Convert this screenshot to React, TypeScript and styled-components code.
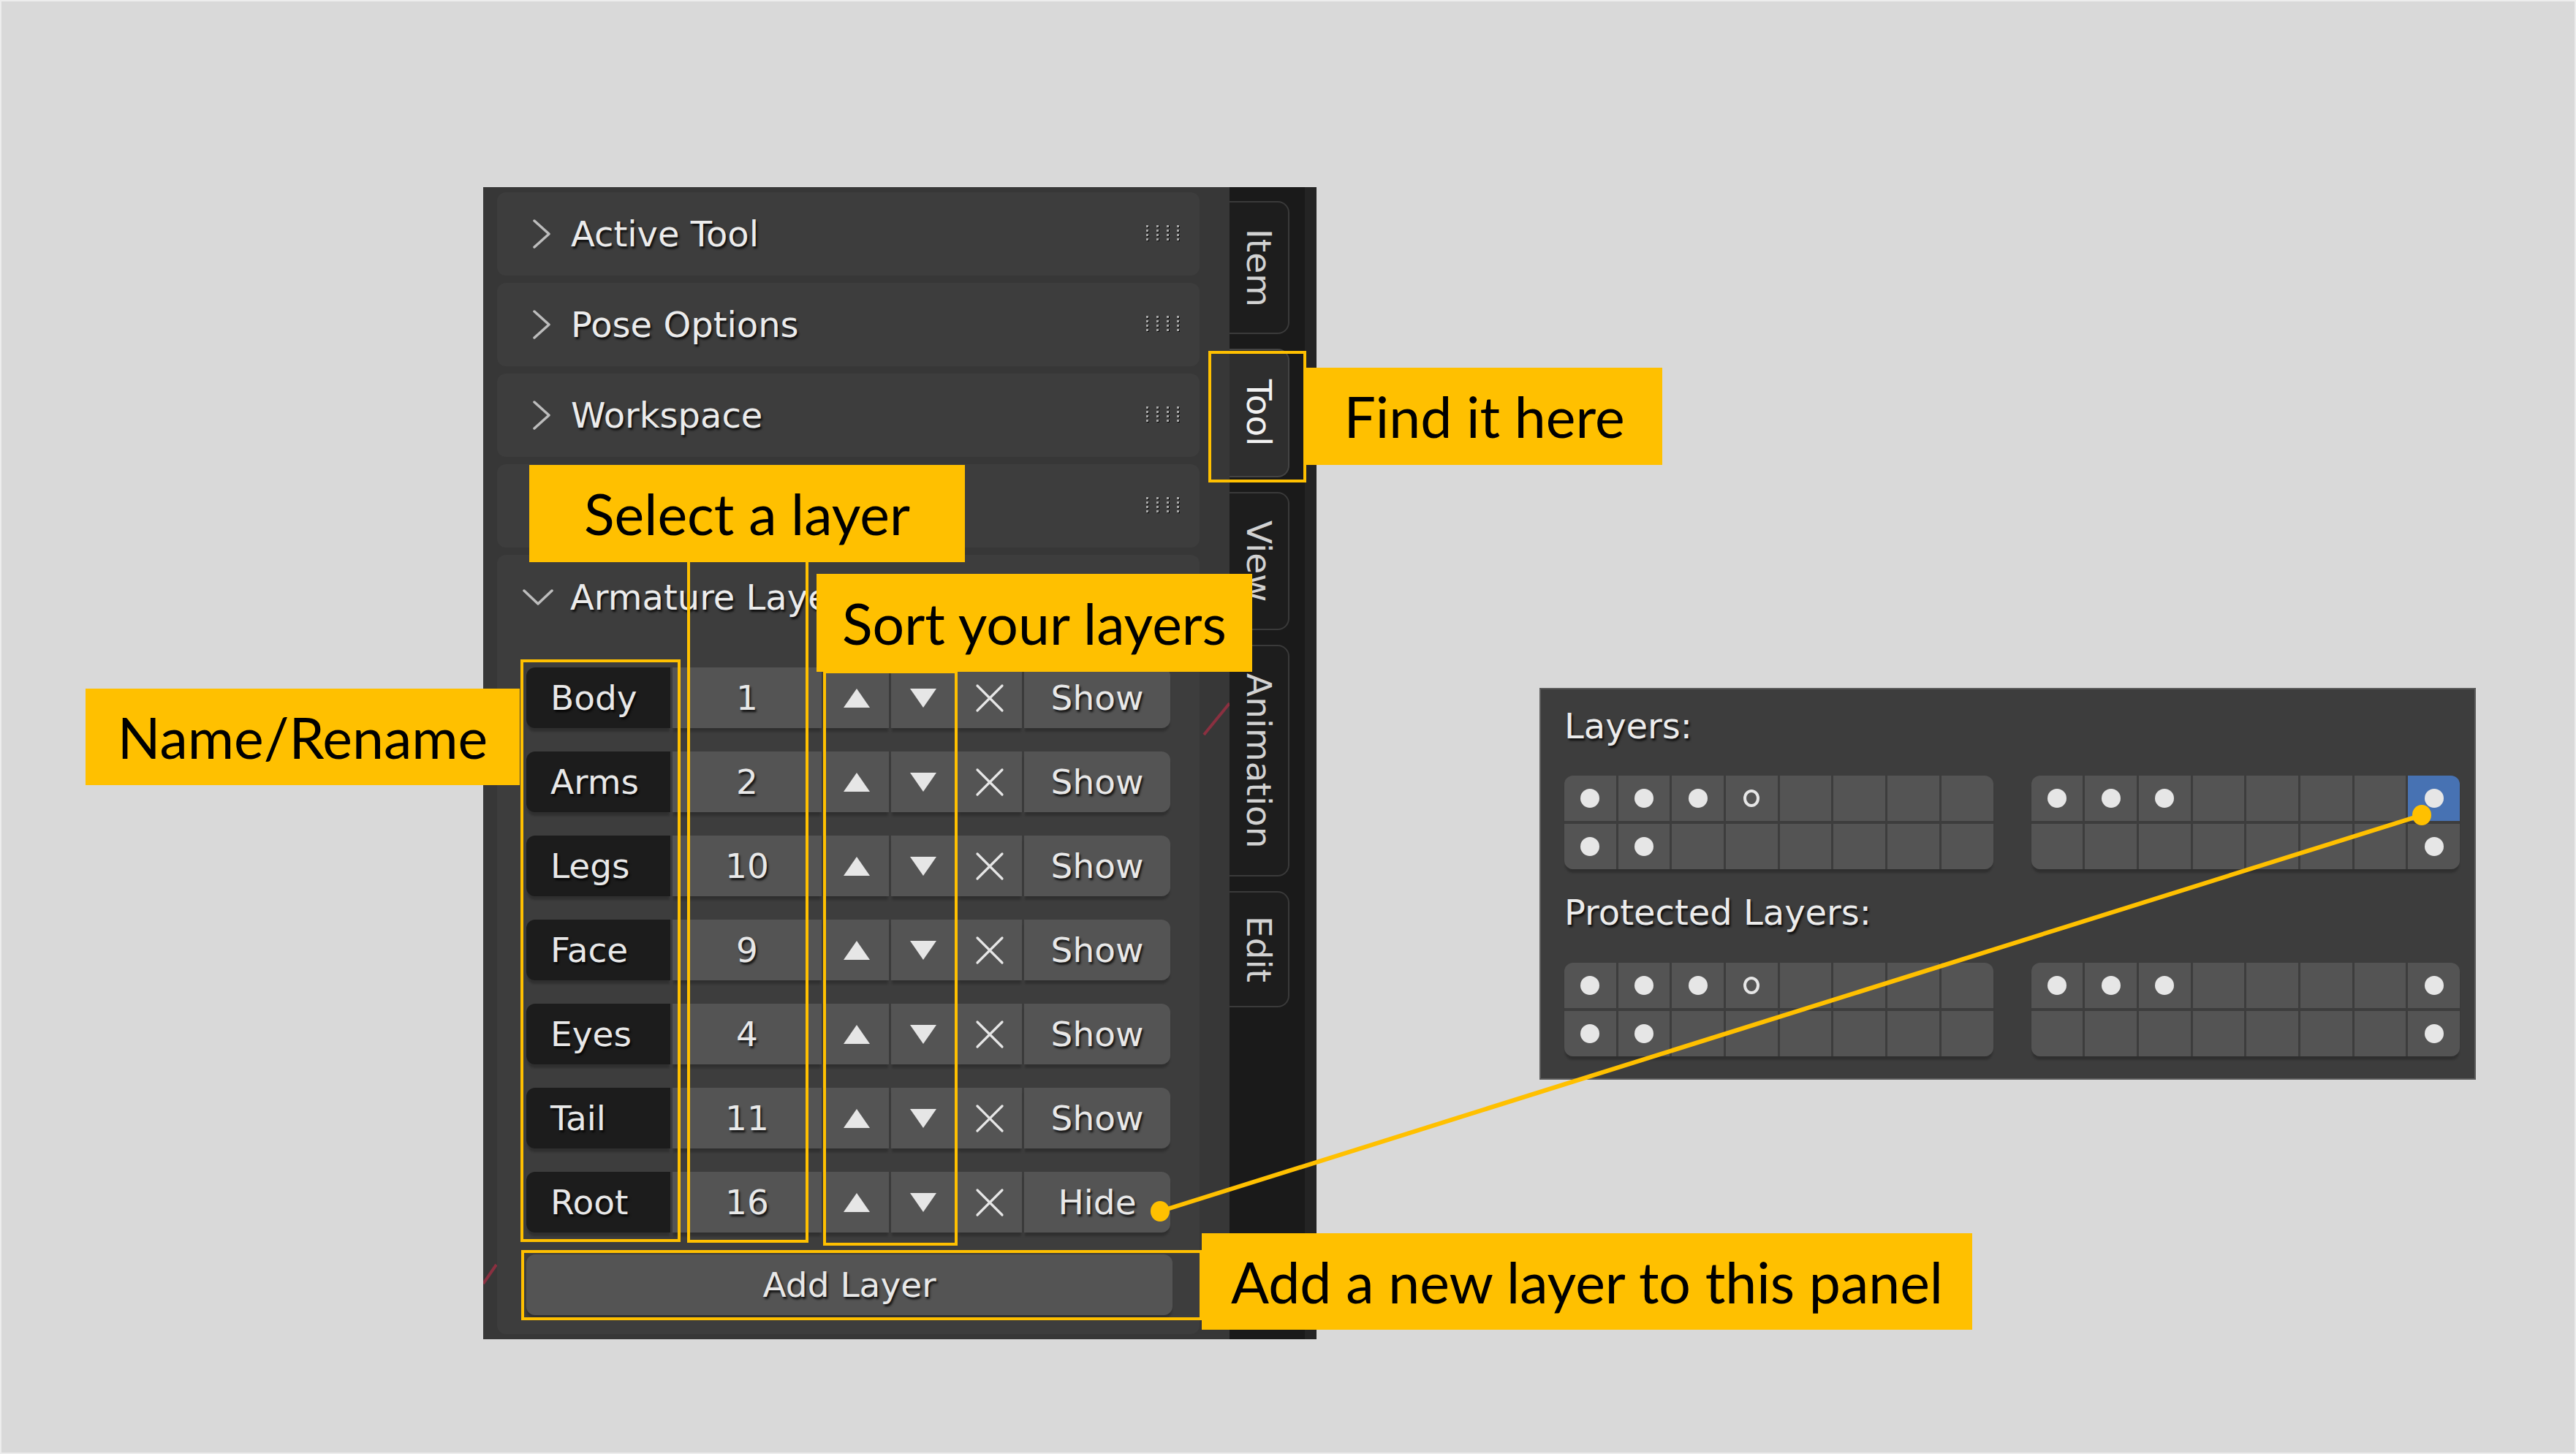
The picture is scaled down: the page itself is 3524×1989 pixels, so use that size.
import React from "react";
import styled, { createGlobalStyle } from "styled-components";

const GlobalStyle = createGlobalStyle`
  html, body { margin: 0; padding: 0; background: #d9d9d9; }
  body { width: 3524px; height: 1989px; overflow: hidden; }
  * { box-sizing: border-box; }
`;

const YELLOW = "#ffc000";

const Page = styled.div`
  position: relative;
  width: 3524px;
  height: 1989px;
  background: #d9d9d9;
  box-shadow: inset 0 0 0 2px #ededed;
  display: flex;
  align-items: flex-start;
  padding: 256px 0 0 661px;
  gap: 305px;
  font-family: "DejaVu Sans", sans-serif;
`;

/* ---------- Blender sidebar ---------- */
const Sidebar = styled.div`
  display: flex;
  flex-shrink: 0;
  width: 1140px;
  height: 1576px;
`;

const Region = styled.div`
  width: 1021px;
  height: 100%;
  background: #373737;
  padding: 7px 41px 7px 19px;
  display: flex;
  flex-direction: column;
  gap: 10px;
  position: relative;
  overflow: hidden;
`;

const ViewportBits = styled.svg`
  position: absolute;
  left: 0;
  top: 0;
  pointer-events: none;
`;

const BlText = styled.span`
  font-family: "DejaVu Sans", sans-serif;
  font-size: 48px;
  color: #ececec;
  text-shadow: 2px 3px 3px rgba(0, 0, 0, 0.8);
  white-space: nowrap;
  line-height: 1;
`;

const PanelHeader = styled.div`
  position: relative;
  height: 114px;
  flex-shrink: 0;
  background: #3d3d3d;
  border-radius: 12px;
  display: flex;
  align-items: center;
  padding: 0 27px 0 48px;
`;

const HeaderTitle = styled(BlText)`
  margin-left: 27px;
  flex: 1;
`;

const Panel = styled.div`
  position: relative;
  flex: 1;
  background: #3d3d3d;
  border-radius: 12px;
  display: flex;
  flex-direction: column;
`;

const SubHeader = styled.div`
  height: 116px;
  display: flex;
  align-items: center;
  padding-left: 35px;
`;

const SubTitle = styled(BlText)`
  margin-left: 23px;
`;

const PanelBody = styled.div`
  display: flex;
  flex-direction: column;
  gap: 32px;
  padding: 38px 39px 26px 40px;
`;

const LayerRow = styled.div`
  display: flex;
  gap: 3px;
  height: 83px;
`;

const Cell = styled.div<{ $w: number; $dark?: boolean; $first?: boolean; $last?: boolean; $left?: boolean }>`
  width: ${(p) => p.$w}px;
  height: 100%;
  background: ${(p) => (p.$dark ? "#1c1c1c" : "#545454")};
  border-radius: ${(p) => (p.$first ? "12px 0 0 12px" : p.$last ? "0 12px 12px 0" : "0")};
  box-shadow: 0 6px 3px -1px rgba(0, 0, 0, 0.22);
  display: flex;
  align-items: center;
  justify-content: ${(p) => (p.$left ? "flex-start" : "center")};
  padding-left: ${(p) => (p.$left ? "33px" : "0")};
`;

const CellText = styled(BlText)`
  font-size: 47px;
  color: #e8e8e8;
`;

const AddButton = styled.div`
  height: 83px;
  width: 884px;
  margin-top: -2px;
  background: #545454;
  border-radius: 12px;
  box-shadow: 0 6px 3px -1px rgba(0, 0, 0, 0.22);
  display: flex;
  align-items: center;
  justify-content: center;
`;

const TabBar = styled.div`
  width: 119px;
  height: 100%;
  background: #1a1a1a;
  border-right: 16px solid #242424;
  display: flex;
  flex-direction: column;
  gap: 20px;
  padding-top: 19px;
`;

const Tab = styled.div<{ $h: number; $active?: boolean }>`
  width: 82px;
  height: ${(p) => p.$h}px;
  background: ${(p) => (p.$active ? "#2e2e2e" : "#1d1d1d")};
  border: 2px solid ${(p) => (p.$active ? "#444" : "#3a3a3a")};
  border-left: none;
  border-radius: 0 16px 16px 0;
  display: flex;
  align-items: center;
  justify-content: center;
`;

const TabLabel = styled.span<{ $active?: boolean }>`
  writing-mode: vertical-rl;
  font-family: "DejaVu Sans", sans-serif;
  font-size: 47px;
  line-height: 1;
  color: ${(p) => (p.$active ? "#f2f2f2" : "#d2d2d2")};
  white-space: nowrap;
`;

/* ---------- Layers panel (right) ---------- */
const LayersPanel = styled.div`
  flex-shrink: 0;
  width: 1281px;
  height: 536px;
  margin-top: 685px;
  background: #3d3d3d;
  border: 2px solid #5c5c5c;
  padding: 22px 20px 0 32px;
  display: flex;
  flex-direction: column;
`;

const LayersLabel = styled(BlText)`
  display: block;
  line-height: 56px;
`;

const LayerGrid = styled.div<{ $mt: number; $mb: number }>`
  display: flex;
  gap: 52px;
  margin: ${(p) => p.$mt}px 0 ${(p) => p.$mb}px;
`;

const LayerBlock = styled.div`
  flex: 1;
  display: flex;
  flex-direction: column;
  gap: 4px;
  border-radius: 12px;
  box-shadow: 0 6px 3px -1px rgba(0, 0, 0, 0.22);
`;

const BitRow = styled.div`
  display: flex;
  gap: 3px;
  height: 62px;
`;

const Bit = styled.div<{ $sel?: boolean; $corner?: string }>`
  flex: 1;
  background: ${(p) => (p.$sel ? "#4772b3" : "#545454")};
  border-radius: ${(p) => p.$corner || "0"};
  display: flex;
  align-items: center;
  justify-content: center;
`;

const Dot = styled.div<{ $hollow?: boolean }>`
  width: ${(p) => (p.$hollow ? 22 : 26)}px;
  height: ${(p) => (p.$hollow ? 24 : 26)}px;
  border-radius: 50%;
  background: ${(p) => (p.$hollow ? "transparent" : "#e6e6e6")};
  border: ${(p) => (p.$hollow ? "4px solid #e6e6e6" : "none")};
`;

/* ---------- Annotations ---------- */
const Callout = styled.div<{ $x: number; $y: number; $w: number; $h: number }>`
  position: absolute;
  left: ${(p) => p.$x}px;
  top: ${(p) => p.$y}px;
  width: ${(p) => p.$w}px;
  height: ${(p) => p.$h}px;
  background: ${YELLOW};
  color: #000;
  font-family: Lato, "Noto Sans", sans-serif;
  font-size: 77px;
  line-height: 1;
  display: flex;
  align-items: center;
  justify-content: center;
  white-space: nowrap;
  z-index: 3;
`;

const Outline = styled.div<{ $x: number; $y: number; $w: number; $h: number }>`
  position: absolute;
  left: ${(p) => p.$x}px;
  top: ${(p) => p.$y}px;
  width: ${(p) => p.$w}px;
  height: ${(p) => p.$h}px;
  border: 4px solid ${YELLOW};
  z-index: 2;
  pointer-events: none;
`;

const Connector = styled.svg`
  position: absolute;
  left: 0;
  top: 0;
  z-index: 4;
  pointer-events: none;
`;

/* ---------- Icons ---------- */
const ChevronRight = () => (
  <svg width="26" height="40" viewBox="0 0 26 40">
    <polyline points="3,2 23,20 3,38" fill="none" stroke="#bdbdbd" strokeWidth="3.5" strokeLinecap="round" strokeLinejoin="round" />
  </svg>
);

const ChevronDown = () => (
  <svg width="42" height="24" viewBox="0 0 42 24">
    <polyline points="2,3 21,21 40,3" fill="none" stroke="#bdbdbd" strokeWidth="3.5" strokeLinecap="round" strokeLinejoin="round" />
  </svg>
);

const DragDots = () => {
  const dots: React.ReactNode[] = [];
  for (let c = 0; c < 4; c++) {
    for (let r = 0; r < 4; r++) {
      const x = 2 + c * 14;
      const y = 1 + r * 6;
      dots.push(<rect key={`d${c}${r}`} x={x + 1} y={y + 1} width="3" height="3" fill="#0a0a0a" />);
      dots.push(<rect key={`l${c}${r}`} x={x} y={y} width="3" height="3" fill="#a8a8a8" />);
    }
  }
  return (
    <svg width="48" height="26" viewBox="0 0 48 26">
      {dots}
    </svg>
  );
};

const TriUp = () => (
  <svg width="38" height="28" viewBox="0 0 38 28">
    <polygon points="19,1 37,27 1,27" fill="#e6e6e6" />
  </svg>
);
const TriDown = () => (
  <svg width="38" height="28" viewBox="0 0 38 28">
    <polygon points="1,1 37,1 19,27" fill="#e6e6e6" />
  </svg>
);
const Cross = () => (
  <svg width="40" height="40" viewBox="0 0 40 40">
    <path d="M3 3 L37 37 M37 3 L3 37" stroke="#e6e6e6" strokeWidth="3.2" strokeLinecap="round" />
  </svg>
);

/* ---------- Data ---------- */
const layers: { name: string; num: string; vis: string }[] = [
  { name: "Body", num: "1", vis: "Show" },
  { name: "Arms", num: "2", vis: "Show" },
  { name: "Legs", num: "10", vis: "Show" },
  { name: "Face", num: "9", vis: "Show" },
  { name: "Eyes", num: "4", vis: "Show" },
  { name: "Tail", num: "11", vis: "Show" },
  { name: "Root", num: "16", vis: "Hide" },
];

const tabs = [
  { label: "Item", h: 182 },
  { label: "Tool", h: 176, active: true },
  { label: "View", h: 189 },
  { label: "Animation", h: 317 },
  { label: "Edit", h: 159 },
];

type BitState = "" | "o" | "h" | "s";
const layerBits: BitState[][][] = [
  [
    ["o", "o", "o", "h", "", "", "", ""],
    ["o", "o", "", "", "", "", "", ""],
  ],
  [
    ["o", "o", "o", "", "", "", "", "s"],
    ["", "", "", "", "", "", "", "o"],
  ],
];
const protectedBits: BitState[][][] = [
  [
    ["o", "o", "o", "h", "", "", "", ""],
    ["o", "o", "", "", "", "", "", ""],
  ],
  [
    ["o", "o", "o", "", "", "", "", "o"],
    ["", "", "", "", "", "", "", "o"],
  ],
];

const cornerFor = (r: number, c: number) => {
  if (r === 0 && c === 0) return "12px 0 0 0";
  if (r === 0 && c === 7) return "0 12px 0 0";
  if (r === 1 && c === 0) return "0 0 0 12px";
  if (r === 1 && c === 7) return "0 0 12px 0";
  return "0";
};

const BitGrid: React.FC<{ data: BitState[][][]; mt: number; mb: number }> = ({ data, mt, mb }) => (
  <LayerGrid $mt={mt} $mb={mb}>
    {data.map((block, bi) => (
      <LayerBlock key={bi}>
        {block.map((row, ri) => (
          <BitRow key={ri}>
            {row.map((b, ci) => (
              <Bit key={ci} $sel={b === "s"} $corner={cornerFor(ri, ci)}>
                {b === "o" || b === "s" ? <Dot /> : null}
                {b === "h" ? <Dot $hollow /> : null}
              </Bit>
            ))}
          </BitRow>
        ))}
      </LayerBlock>
    ))}
  </LayerGrid>
);

export default function App() {
  return (
    <>
      <GlobalStyle />
      <Page>
        <Sidebar>
          <Region>
            <ViewportBits width="1021" height="1576" viewBox="0 0 1021 1576">
              <line x1="986" y1="749" x2="1021" y2="706" stroke="#8a3040" strokeWidth="4" />
              <line x1="0" y1="1500" x2="18" y2="1474" stroke="#8a3040" strokeWidth="4" />
            </ViewportBits>
            {["Active Tool", "Pose Options", "Workspace", ""].map((t, i) => (
              <PanelHeader key={i}>
                <ChevronRight />
                <HeaderTitle>{t}</HeaderTitle>
                <DragDots />
              </PanelHeader>
            ))}
            <Panel>
              <SubHeader>
                <ChevronDown />
                <SubTitle>Armature Layers</SubTitle>
              </SubHeader>
              <PanelBody>
                {layers.map((l) => (
                  <LayerRow key={l.name}>
                    <Cell $w={197} $dark $first $left>
                      <CellText>{l.name}</CellText>
                    </Cell>
                    <Cell $w={204}>
                      <CellText>{l.num}</CellText>
                    </Cell>
                    <Cell $w={89}>
                      <TriUp />
                    </Cell>
                    <Cell $w={88}>
                      <TriDown />
                    </Cell>
                    <Cell $w={88}>
                      <Cross />
                    </Cell>
                    <Cell $w={200} $last>
                      <CellText>{l.vis}</CellText>
                    </Cell>
                  </LayerRow>
                ))}
                <AddButton>
                  <CellText>Add Layer</CellText>
                </AddButton>
              </PanelBody>
            </Panel>
          </Region>
          <TabBar>
            {tabs.map((t) => (
              <Tab key={t.label} $h={t.h} $active={t.active}>
                <TabLabel $active={t.active}>{t.label}</TabLabel>
              </Tab>
            ))}
          </TabBar>
        </Sidebar>

        <LayersPanel>
          <LayersLabel>Layers:</LayersLabel>
          <BitGrid data={layerBits} mt={40} mb={31} />
          <LayersLabel>Protected Layers:</LayersLabel>
          <BitGrid data={protectedBits} mt={41} mb={0} />
        </LayersPanel>

        <Outline $x={1653} $y={480} $w={134} $h={180} />
        <Outline $x={712} $y={902} $w={219} $h={797} />
        <Outline $x={940} $y={765} $w={166} $h={935} />
        <Outline $x={1126} $y={917} $w={184} $h={787} />
        <Outline $x={713} $y={1710} $w={932} $h={96} />

        <Callout $x={1787} $y={503} $w={487} $h={133}>Find it here</Callout>
        <Callout $x={724} $y={636} $w={596} $h={133}>Select a layer</Callout>
        <Callout $x={1117} $y={785} $w={596} $h={134}>Sort your layers</Callout>
        <Callout $x={117} $y={942} $w={594} $h={132}>Name/Rename</Callout>
        <Callout $x={1644} $y={1687} $w={1054} $h={132}>Add a new layer to this panel</Callout>

        <Connector width="3524" height="1989" viewBox="0 0 3524 1989">
          <line x1="1587" y1="1657" x2="3313" y2="1115" stroke={YELLOW} strokeWidth="6" />
          <ellipse cx="1587" cy="1657" rx="13" ry="14" fill={YELLOW} />
          <ellipse cx="3313" cy="1115" rx="13" ry="14" fill={YELLOW} />
        </Connector>
      </Page>
    </>
  );
}
